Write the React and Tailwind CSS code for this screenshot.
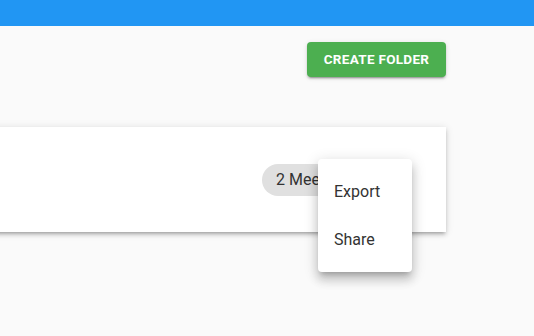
export default function App() {
  return (
    <div className="relative w-[534px] h-[336px] overflow-hidden bg-[#fafafa]" style={{ fontFamily: "Roboto, 'Liberation Sans', sans-serif" }}>
      <div className="h-[26px] bg-[#2196f3]" />
      <div className="flex flex-col items-end pr-[88px]">
        <button className="mt-[16px] h-[35px] w-[139px] rounded-[4px] bg-[#4caf50] text-white text-[13.5px] font-bold uppercase tracking-[0.3px] shadow-[0_3px_1px_-2px_rgba(0,0,0,0.2),0_2px_2px_0_rgba(0,0,0,0.14),0_1px_5px_0_rgba(0,0,0,0.12)]">
          Create Folder
        </button>
        <div className="mt-[50px] h-[105px] w-[600px] bg-white shadow-[0_3px_3px_-2px_rgba(0,0,0,0.2),0_3px_4px_0_rgba(0,0,0,0.14),0_1px_8px_0_rgba(0,0,0,0.12)] flex items-center">
          <div className="ml-[416px] h-[32px] rounded-full bg-[#e0e0e0] flex items-center px-[14px] text-[16px] text-[#333]">
            2 Meetings
          </div>
        </div>
      </div>
      <div className="absolute left-[318px] top-[159px] w-[94px] bg-white rounded-[4px] pt-[9px] pb-[8px] shadow-[0_5px_5px_-3px_rgba(0,0,0,0.2),0_8px_10px_1px_rgba(0,0,0,0.14),0_3px_14px_2px_rgba(0,0,0,0.12)]">
        <div className="h-[48px] flex items-center px-[16px] text-[16px] text-[#333]">Export</div>
        <div className="h-[48px] flex items-center px-[16px] text-[16px] text-[#333]">Share</div>
      </div>
    </div>
  );
}
